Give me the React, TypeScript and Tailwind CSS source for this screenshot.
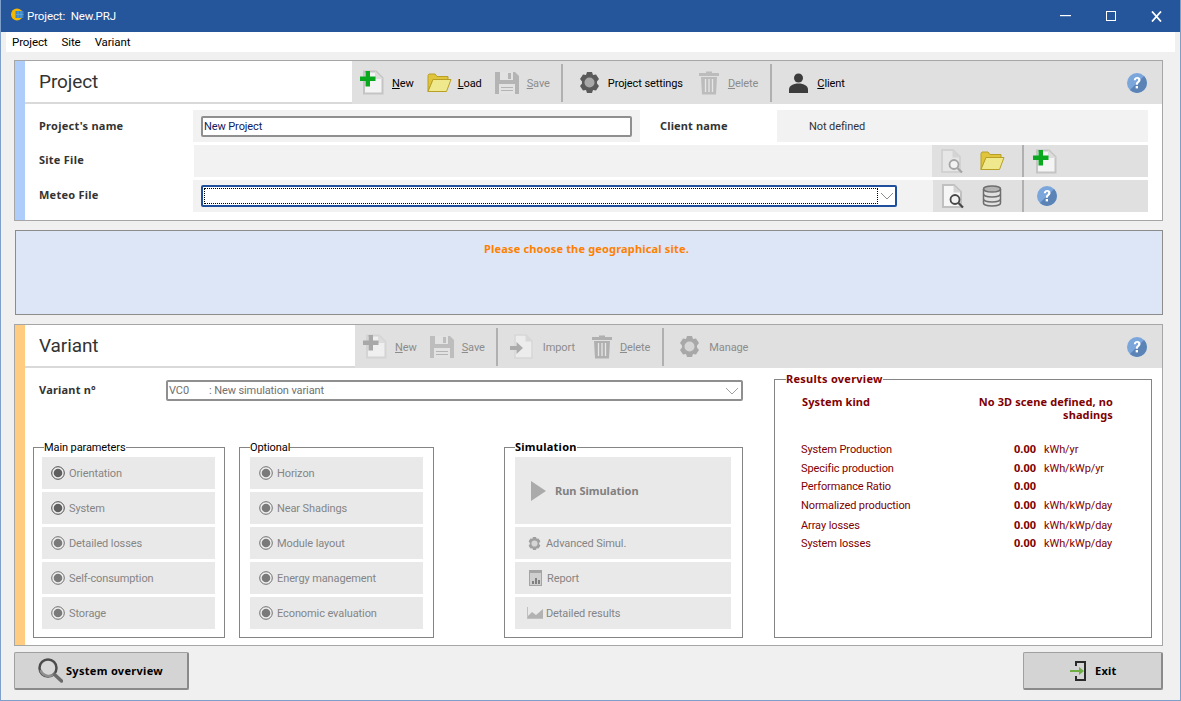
import type { ReactNode } from 'react';

const DocPlus = ({ gray = false, pale = false }: { gray?: boolean; pale?: boolean }) => (
  <svg width="24" height="25" viewBox="0 0 24 25" className="shrink-0">
    <path d="M4 1.500h12l6.500 6.500V23.500H4z" fill={pale ? '#efefef' : '#f4f4f4'} stroke={pale ? '#d4d4d4' : '#c4c4c4'} strokeWidth="2" />
    <path d="M15 1v8h8" fill="#dcdcdc" />
    <path d="M5.500 1h4.500v5.500h5.500V11H10v5.500H5.500V11H0V6.500h5.500z" fill={gray ? '#a8a8a8' : '#0aa81e'} />
  </svg>
);

const Folder = () => (
  <svg width="25" height="20" viewBox="0 0 25 20" className="shrink-0">
    <path d="M1 18.500V2.500L2 1h6l2 2.500h11v3H6L1 18.500z" fill="#e0c43c" stroke="#b8a024" />
    <path d="M1 18.500 6 6.500h18L19.500 18.500z" fill="#f0e88c" stroke="#b8a024" />
  </svg>
);

const Floppy = ({ light = false }: { light?: boolean }) => (
  <svg width="24" height="24" viewBox="0 0 24 24" className="shrink-0">
    <path d="M0 1h20l4 4v18H0z" fill={light ? '#bdbdbd' : '#b4b4b4'} />
    <rect x="5" y="1" width="13" height="8" fill="#e2e2e2" />
    <rect x="13" y="2" width="3" height="6" fill={light ? '#bdbdbd' : '#b4b4b4'} />
    <rect x="4" y="13" width="16" height="10" fill="#e2e2e2" />
    <path d="M6 16.500h12M6 19.500h12" stroke="#b4b4b4" strokeWidth="1.200" />
  </svg>
);

const Gear = ({ color = '#5a5a5a', size = 21 }: { color?: string; size?: number }) => (
  <svg width={size} height={size} viewBox="0 0 21 21" className="shrink-0">
    <path d="M8 0h5l1 3 3-.6 3 4.600-2 2.500v2l2 2.500-3 4.600-3-.6-1 3H8l-1-3-3 .6-3-4.600 2-2.500v-2L1 7l3-4.600 3 .6z" fill={color} />
    <circle cx="10.500" cy="10.500" r="5" fill={color === '#5a5a5a' ? '#a8a8a8' : '#d6d6d6'} />
  </svg>
);

const Trash = ({ color = '#bcbcbc' }: { color?: string }) => (
  <svg width="20" height="24" viewBox="0 0 20 24" className="shrink-0">
    <path d="M7 2V.500h6V2h7v3H0V2z" fill={color} />
    <path d="M2 6h16l-1 17.500H3z" fill={color} />
    <path d="M6.500 8v13M10 8v13M13.500 8v13" stroke="#e6e6e6" strokeWidth="1.300" />
  </svg>
);

const UserIcon = () => (
  <svg width="19" height="20" viewBox="0 0 19 20" className="shrink-0">
    <circle cx="9.500" cy="5" r="4.500" fill="#3c3c3c" />
    <path d="M0 20v-3.500C0 13 4 10.500 9.500 10.500S19 13 19 16.500V20z" fill="#3c3c3c" />
  </svg>
);

const Help = () => (
  <svg width="20" height="20" viewBox="0 0 20 20" className="shrink-0">
    <circle cx="10" cy="10" r="10" fill="#7ba6dc" />
    <path d="M17.070 2.930A10 10 0 0 1 2.930 17.070z" fill="#5b83b6" />
    <path d="M6.800 7.300C7 5 8.500 4 10.200 4c2 0 3.300 1.200 3.300 2.900 0 2.500-2.600 2.400-2.600 4.800H8.800c0-3.200 2.400-3.100 2.400-4.700 0-.8-.4-1.300-1.100-1.300-.8 0-1.200.6-1.300 1.600z" fill="#fff" />
    <rect x="8.700" y="13" width="2.300" height="2.400" fill="#fff" />
  </svg>
);

const DocSearch = ({ pale = false }: { pale?: boolean }) => (
  <svg width="23" height="25" viewBox="0 0 23 25" className="shrink-0">
    <path d="M1 1h11l7 7v15H1z" fill={pale ? '#e6e6e6' : '#f6f6f6'} stroke={pale ? '#d2d2d2' : '#c0c0c0'} strokeWidth="2" />
    <path d="M11.500 1v7.500H19" fill="#d4d4d4" />
    <circle cx="13" cy="15.500" r="4.500" fill="#f2f2f2" stroke={pale ? '#a4a4a4' : '#484848'} strokeWidth="1.800" />
    <path d="M16.500 19l4.500 4.500" stroke={pale ? '#a4a4a4' : '#484848'} strokeWidth="2.200" />
  </svg>
);

const Database = () => (
  <svg width="20" height="22" viewBox="0 0 20 22" className="shrink-0" fill="none" stroke="#6e6e6e" strokeWidth="1.500">
    <ellipse cx="10" cy="4" rx="8.500" ry="3" fill="#b4b4b4" />
    <path d="M1.500 4v14c0 1.700 3.800 3 8.500 3s8.500-1.300 8.500-3V4" />
    <path d="M1.500 9c0 1.700 3.800 3 8.500 3s8.500-1.300 8.500-3M1.500 14c0 1.700 3.800 3 8.500 3s8.500-1.300 8.500-3" />
  </svg>
);

const ImportIcon = () => (
  <svg width="23" height="25" viewBox="0 0 23 25" className="shrink-0">
    <path d="M5 1h11l6 6v17H5z" fill="#ececec" stroke="#d6d6d6" strokeWidth="1.500" />
    <path d="M15.500 1v6.500H22" fill="#d8d8d8" />
    <path d="M0 12h6.500V8l6.500 6-6.500 6v-4H0z" fill="#ababab" />
  </svg>
);

const Radio = ({ dark = false }: { dark?: boolean }) => (
  <svg width="14" height="14" viewBox="0 0 14 14" className="shrink-0">
    <circle cx="7" cy="7" r="6.300" fill="#f0f0f0" stroke={dark ? '#4a4a4a' : '#6e6e6e'} strokeWidth="1" />
    <circle cx="7" cy="7" r="4.300" fill={dark ? '#5f5f5f' : '#7a7a7a'} />
  </svg>
);

const ReportIcon = () => (
  <svg width="13" height="16" viewBox="0 0 13 16" className="shrink-0">
    <rect width="13" height="16" fill="#a4a4a4" />
    <rect x="1" y="3" width="11" height="12" fill="#cfcfcf" />
    <path d="M3 14h2v-3H3zM6 14h2V8H6zM9 14h2v-4H9z" fill="#808080" />
  </svg>
);

const ChartIcon = () => (
  <svg width="16" height="12" viewBox="0 0 16 12" className="shrink-0">
    <path d="M0 0v12h16v-1H1V0z" fill="#c0c0c0" />
    <path d="M1 9l4-4 4 3 7-6v9H1z" fill="#b2b2b2" />
  </svg>
);

const SearchBig = () => (
  <svg width="25" height="25" viewBox="0 0 25 25" className="shrink-0">
    <circle cx="10" cy="10" r="8.500" fill="#d8d8d8" stroke="#4c4c4c" strokeWidth="2.500" />
    <path d="M2.500 12A8.500 8.500 0 0 0 17 15" fill="none" stroke="#8e8e8e" strokeWidth="2.500" />
    <path d="M16.500 16.500l7 6.500" stroke="#6a6a6a" strokeWidth="3.500" strokeLinecap="round" />
  </svg>
);

const ExitIcon = () => (
  <svg width="16" height="20" viewBox="0 0 16 20" className="shrink-0">
    <path d="M6 5V1h9v18H6v-4" fill="none" stroke="#2a2a2a" strokeWidth="2" />
    <path d="M0 9h9V6l5 4-5 4v-3H0z" fill="#6fae45" />
  </svg>
);

const AppIcon = () => (
  <svg width="13" height="13" viewBox="0 0 13 13" className="shrink-0">
    <circle cx="6" cy="6.500" r="6" fill="#f5b800" />
    <rect x="4.500" y="3" width="8" height="7" fill="#3d86c6" />
    <path d="M7 3v7M10 3v7M4.500 6.500h8" stroke="#6aaee0" strokeWidth=".6" />
  </svg>
);

const Divider = ({ className }: { className: string }) => <div className={`w-[2px] self-center h-[38px] bg-[#b0b0b0] ${className}`} />;

// Roboto sits a pixel high next to the icons, the padding pushes it back down
function Label({ className = '', children }: { className?: string; children: ReactNode }) {
  return <span className={`pt-[2px] ${className}`}>{children}</span>;
}

function SideButton({ label, dark }: { label: string; dark?: boolean }) {
  return (
    <div className="h-8 bg-[#e9e9e9] flex items-center pl-[9px] gap-[4px] text-[#858585]">
      <Radio dark={dark} />
      <Label>{label}</Label>
    </div>
  );
}

function Group({ title, className, inner, bold, children }: { title: string; className: string; inner: string; bold?: boolean; children: ReactNode }) {
  return (
    <fieldset className={`border border-[#858585] h-[198px] ${className}`}>
      <legend className={`ml-[10px] h-[14px] text-black ${bold ? "leading-[14px] font-bold font-['Noto_Sans',sans-serif] tracking-[0.25px]" : 'leading-[16px]'}`}>{title}</legend>
      <div className={`pt-[3px] flex flex-col gap-[3px] ${inner}`}>{children}</div>
    </fieldset>
  );
}

const results = [
  { label: 'System Production', unit: 'kWh/yr', cls: 'mt-[21px]' },
  { label: 'Specific production', unit: 'kWh/kWp/yr', cls: 'mt-[5px]' },
  { label: 'Performance Ratio', unit: '', cls: 'mt-[4px]' },
  { label: 'Normalized production', unit: 'kWh/kWp/day', cls: 'mt-[5px]' },
  { label: 'Array losses', unit: 'kWh/kWp/day', cls: 'mt-[6px]' },
  { label: 'System losses', unit: 'kWh/kWp/day', cls: 'mt-[4px]' },
];

export default function App() {
  return (
    <div className="w-[1181px] h-[701px] overflow-hidden bg-[#f0f0f0] border-x border-b border-[#7f9fcb] flex flex-col font-['Roboto',sans-serif] text-[11px] leading-[14px] tracking-[-0.1px] text-[#1a1a1a]">
      {/* title bar */}
      <div className="h-8 -mx-px shrink-0 bg-[#25559b] flex items-center pl-[11px] text-white text-[11.5px]">
        <div className="-mt-[3px]"><AppIcon /></div>
        <span className="ml-[3px] whitespace-pre">Project:  New.PRJ</span>
        <svg width="11" height="2" className="ml-auto mr-[35px]"><rect width="11" height="1.200" fill="#fff" /></svg>
        <svg width="10" height="10" className="mr-[35px] -mt-[1px]"><rect x=".5" y=".5" width="9" height="9" fill="none" stroke="#fff" /></svg>
        <svg width="11" height="11" className="mr-[19px]"><path d="M1 .5l9 10M10 .5l-9 10" stroke="#fff" strokeWidth="1.800" fill="none" /></svg>
      </div>
      {/* menu */}
      <div className="h-5 shrink-0 bg-white mx-[5px] flex items-center pl-[6px] gap-[14px] text-[11.5px] text-black">
        <span>Project</span>
        <span>Site</span>
        <span>Variant</span>
      </div>

      <div className="flex-1 flex flex-col px-[13px] pr-[17px] pt-2">
        {/* project panel */}
        <section className="h-[161px] shrink-0 border border-[#a6a6a6] bg-white flex">
          <div className="w-[10px] shrink-0 bg-[#aecdfb]" />
          <div className="flex-1 flex flex-col">
            <div className="h-[43px] shrink-0 flex">
              <div className="w-[327px] pl-[14px] flex items-center text-[19px] text-[#333] border-b-2 border-[#d9d9d9]">Project</div>
              <div className="flex-1 bg-[#e0e0e0] flex items-center text-black">
                <div className="ml-[8px]"><DocPlus /></div>
                <Label className="ml-[8px]"><u>N</u>ew</Label>
                <div className="ml-[13px]"><Folder /></div>
                <Label className="ml-[6px]"><u>L</u>oad</Label>
                <div className="ml-[13px]"><Floppy /></div>
                <Label className="ml-[8px] text-[#8c8c8c]"><u>S</u>ave</Label>
                <Divider className="ml-[11px]" />
                <div className="ml-[16px]"><Gear /></div>
                <Label className="ml-[8px]">Project settings</Label>
                <div className="ml-[16px]"><Trash /></div>
                <Label className="ml-[9px] text-[#8c8c8c]"><u>D</u>elete</Label>
                <Divider className="ml-[12px]" />
                <div className="ml-[17px]"><UserIcon /></div>
                <Label className="ml-[9px]"><u>C</u>lient</Label>
                <div className="ml-auto mr-[15px]"><Help /></div>
              </div>
            </div>
            <div className="flex-1 pt-[6px] pr-[14px] flex flex-col gap-[3px]">
              <div className="h-8 flex items-center">
                <span className="w-[168px] pl-[14px] font-bold font-['Noto_Sans',sans-serif] tracking-[0.25px] text-[#333]">Project's name</span>
                <div className="w-[447px] h-8 bg-[#f2f2f2] flex items-center pl-2">
                  <div className="w-[431px] h-[21px] border-2 border-[#8f8f8f] rounded-[2px] bg-white flex items-center pl-px pt-[2px] text-[#102060]">New Project</div>
                </div>
                <span className="w-[137px] pl-[20px] font-bold font-['Noto_Sans',sans-serif] tracking-[0.15px] text-[#333]">Client name</span>
                <div className="flex-1 h-8 bg-[#f2f2f2] flex items-center pl-[32px] pt-[2px] text-[#333]">Not defined</div>
              </div>
              <div className="h-8 flex items-center">
                <span className="w-[169px] pl-[14px] pb-[2px] font-bold font-['Noto_Sans',sans-serif] tracking-[0.25px] text-[#333]">Site File</span>
                <div className="w-[738px] h-8 bg-[#f2f2f2]" />
                <div className="flex-1 h-8 bg-[#e0e0e0] flex items-center">
                  <div className="ml-[9px]"><DocSearch pale /></div>
                  <div className="ml-[16px]"><Folder /></div>
                  <Divider className="ml-[17px] !h-8" />
                  <div className="ml-[9px]"><DocPlus /></div>
                </div>
              </div>
              <div className="h-8 flex items-center">
                <span className="w-[168px] pl-[14px] pb-[2px] font-bold font-['Noto_Sans',sans-serif] tracking-[0.25px] text-[#333]">Meteo File</span>
                <div className="w-[740px] h-8 bg-[#f2f2f2] flex items-center pl-2">
                  <div className="w-[696px] h-[22px] border-2 border-[#1f4e9c] rounded-[2px] bg-white flex items-center p-px">
                    <div className="w-[674px] h-full border border-dotted border-black" />
                    <svg width="14" height="8" viewBox="0 0 14 8" className="ml-[2px]"><path d="M1 1l6 6 6-6" fill="none" stroke="#8c8c8c" /></svg>
                  </div>
                </div>
                <div className="flex-1 h-8 bg-[#e0e0e0] flex items-center">
                  <div className="ml-[9px]"><DocSearch /></div>
                  <div className="ml-[17px]"><Database /></div>
                  <Divider className="ml-[20px] !h-8" />
                  <div className="ml-[13px]"><Help /></div>
                </div>
              </div>
            </div>
          </div>
        </section>

        {/* message */}
        <div className="h-[85px] shrink-0 mt-[9px] ml-px border border-[#8c8c8c] bg-[#dde6f7] pt-[11px] pr-[5px] text-center font-bold font-['Noto_Sans',sans-serif] tracking-[0.17px] text-[#ff8000]">
          Please choose the geographical site.
        </div>

        {/* variant panel */}
        <section className="h-[322px] shrink-0 mt-[9px] border border-[#a6a6a6] bg-white flex">
          <div className="w-[10px] shrink-0 bg-[#ffcc80]" />
          <div className="flex-1 flex flex-col">
            <div className="h-[43px] shrink-0 flex">
              <div className="w-[330px] pl-[14px] flex items-center text-[19px] text-[#333] border-b-2 border-[#d9d9d9]">Variant</div>
              <div className="flex-1 bg-[#e0e0e0] flex items-center text-[#8c8c8c]">
                <div className="ml-[8px]"><DocPlus gray pale /></div>
                <Label className="ml-[8px]"><u>N</u>ew</Label>
                <div className="ml-[13px]"><Floppy light /></div>
                <Label className="ml-[8px]"><u>S</u>ave</Label>
                <Divider className="ml-[11px]" />
                <div className="ml-[12px]"><ImportIcon /></div>
                <Label className="ml-[10px]">Import</Label>
                <div className="ml-[17px]"><Trash color="#b0b0b0" /></div>
                <Label className="ml-[8px]"><u>D</u>elete</Label>
                <Divider className="ml-[12px]" />
                <div className="ml-[15px]"><Gear color="#a8a8a8" /></div>
                <Label className="ml-[9px]">Manage</Label>
                <div className="ml-auto mr-[15px]"><Help /></div>
              </div>
            </div>
            <div className="flex-1 flex pl-2 pt-[4px]">
              <div className="w-[710px] flex flex-col">
                <div className="h-[21px] mt-[8px] flex items-center">
                  <span className="w-[133px] pl-[6px] pb-[2px] font-bold font-['Noto_Sans',sans-serif] tracking-[0.2px] text-[#333]">Variant n°</span>
                  <div className="w-[577px] h-[21px] border-2 border-[#8f8f8f] rounded-[2px] flex items-center pl-px pr-[2px] text-[#707070]">
                    <span className="w-[40px]">VC0</span>
                    <span>: New simulation variant</span>
                    <svg width="14" height="8" viewBox="0 0 14 8" className="ml-auto"><path d="M1 1l6 6 6-6" fill="none" stroke="#a0a0a0" /></svg>
                  </div>
                </div>
                <div className="flex mt-[39px]">
                  <Group title="Main parameters" className="w-[192px]" inner="pl-2 pr-[9px]">
                    <SideButton label="Orientation" dark />
                    <SideButton label="System" dark />
                    <SideButton label="Detailed losses" />
                    <SideButton label="Self-consumption" />
                    <SideButton label="Storage" />
                  </Group>
                  <Group title="Optional" className="w-[195px] ml-[14px]" inner="px-[10px]">
                    <SideButton label="Horizon" />
                    <SideButton label="Near Shadings" />
                    <SideButton label="Module layout" />
                    <SideButton label="Energy management" />
                    <SideButton label="Economic evaluation" />
                  </Group>
                  <Group title="Simulation" bold className="w-[239px] ml-[70px]" inner="pl-[10px] pr-[11px]">
                    <div className="h-[67px] bg-[#e9e9e9] flex items-center pl-[16px] font-bold font-['Noto_Sans',sans-serif] tracking-normal text-[#808080]">
                      <svg width="15" height="20" viewBox="0 0 15 20"><path d="M0 0l15 10L0 20z" fill="#aaaaaa" /></svg>
                      <span className="ml-[9px]">Run Simulation</span>
                    </div>
                    <div className="h-8 bg-[#e9e9e9] flex items-center pl-[13px] text-[#858585]">
                      <Gear color="#a0a0a0" size={13} />
                      <Label className="ml-[5px]">Advanced Simul.</Label>
                    </div>
                    <div className="h-8 bg-[#e9e9e9] flex items-center pl-[14px] text-[#858585]">
                      <ReportIcon />
                      <Label className="ml-[5px]">Report</Label>
                    </div>
                    <div className="h-8 bg-[#e9e9e9] flex items-center pl-[12px] text-[#858585]">
                      <ChartIcon />
                      <Label className="ml-[3px]">Detailed results</Label>
                    </div>
                  </Group>
                </div>
              </div>
              <fieldset className="w-[378px] h-[266px] ml-[31px] border border-[#858585] text-[#800000]">
                <legend className="ml-[11px] h-[14px] leading-[14px] font-bold font-['Noto_Sans',sans-serif] tracking-[0.25px]">Results overview</legend>
                <div className="pl-[26px]">
                  <div className="flex font-bold font-['Noto_Sans',sans-serif] tracking-[0.1px] pt-[9px]">
                    <span className="ml-px">System kind</span>
                    <span className="ml-auto mr-[38px] w-[150px] text-right leading-[13px]">No 3D scene defined, no shadings</span>
                  </div>
                  {results.map((r) => (
                    <div key={r.label} className={`flex h-[14px] ${r.cls}`}>
                      <span className="w-[211px] mt-px">{r.label}</span>
                      <span className="w-[24px] text-right font-bold font-['Noto_Sans',sans-serif] tracking-normal">0.00</span>
                      <span className="ml-2 mt-px">{r.unit}</span>
                    </div>
                  ))}
                </div>
              </fieldset>
            </div>
          </div>
        </section>

        {/* bottom buttons */}
        <div className="flex justify-between mt-[6px]">
          <button className="w-[175px] h-[38px] bg-[#d4d4d4] border border-[#a0a0a0] border-r-2 border-b-2 border-r-[#8a8a8a] border-b-[#8a8a8a] rounded-[2px] flex items-center pl-[23px] font-bold font-['Noto_Sans',sans-serif] tracking-[0.3px] text-black">
            <SearchBig />
            <span className="ml-[3px]">System overview</span>
          </button>
          <button className="w-[140px] h-[38px] bg-[#d4d4d4] border border-[#a0a0a0] border-r-2 border-b-2 border-r-[#8a8a8a] border-b-[#8a8a8a] rounded-[2px] flex items-center pl-[46px] font-bold font-['Noto_Sans',sans-serif] tracking-[0.25px] text-black">
            <ExitIcon />
            <span className="ml-[9px]">Exit</span>
          </button>
        </div>
      </div>
    </div>
  );
}
